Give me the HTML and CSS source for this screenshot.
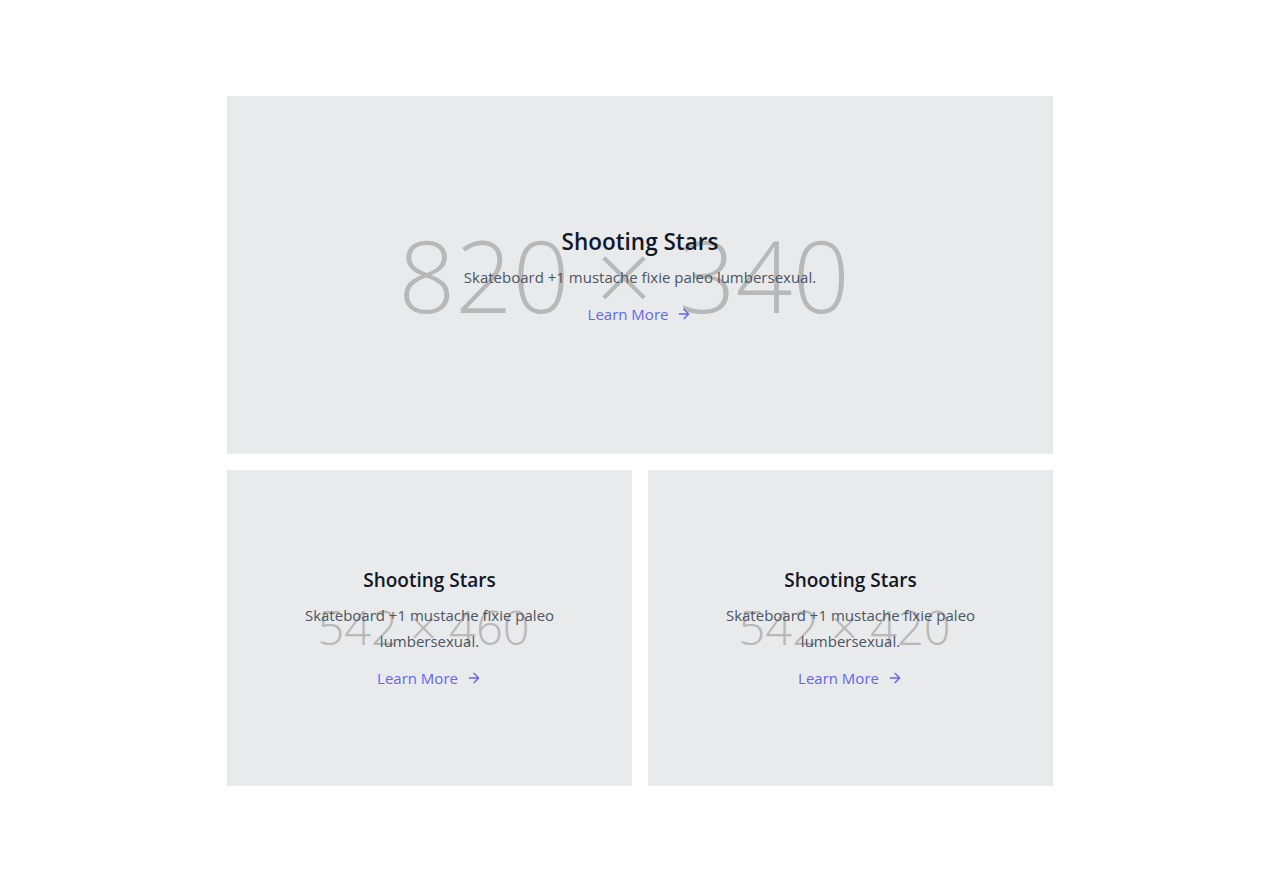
FILE: index.html
```html
<!DOCTYPE html>
<html lang="en">
<head>
<meta charset="utf-8">
<title>Shooting Stars</title>
<link rel="stylesheet" href="styles.css">
</head>
<body>
<section class="section">
  <div class="grid">
    <div class="card card-wide">
      <div class="ph ph-big"><span>820 × 340</span></div>
      <div class="content content-wide">
        <h2 class="title title-big">Shooting Stars</h2>
        <p class="desc">Skateboard +1 mustache fixie paleo lumbersexual.</p>
        <a class="link" href="#">Learn More
          <svg class="arrow" viewBox="0 0 24 24" fill="none" stroke="currentColor" stroke-width="2" stroke-linecap="round" stroke-linejoin="round"><path d="M5 12h14M12 5l7 7-7 7"/></svg>
        </a>
      </div>
    </div>
    <div class="card">
      <div class="ph ph-small"><span>542 × 460</span></div>
      <div class="content">
        <h2 class="title">Shooting Stars</h2>
        <p class="desc">Skateboard +1 mustache fixie paleo lumbersexual.</p>
        <a class="link" href="#">Learn More
          <svg class="arrow" viewBox="0 0 24 24" fill="none" stroke="currentColor" stroke-width="2" stroke-linecap="round" stroke-linejoin="round"><path d="M5 12h14M12 5l7 7-7 7"/></svg>
        </a>
      </div>
    </div>
    <div class="card">
      <div class="ph ph-small"><span>542 × 420</span></div>
      <div class="content">
        <h2 class="title">Shooting Stars</h2>
        <p class="desc">Skateboard +1 mustache fixie paleo lumbersexual.</p>
        <a class="link" href="#">Learn More
          <svg class="arrow" viewBox="0 0 24 24" fill="none" stroke="currentColor" stroke-width="2" stroke-linecap="round" stroke-linejoin="round"><path d="M5 12h14M12 5l7 7-7 7"/></svg>
        </a>
      </div>
    </div>
  </div>
</section>
</body>
</html>
```
FILE: styles.css
```css
* { box-sizing: border-box; }
html, body { margin: 0; padding: 0; background: #ffffff; }
body {
  font-family: "Open Sans", "Noto Sans", sans-serif;
  color: #4b5563;
}
.section {
  padding: 96px 0;
}
.grid {
  width: 826px;
  margin: 0 auto;
  display: grid;
  grid-template-columns: 1fr 1fr;
  column-gap: 16px;
  row-gap: 16px;
}
.card {
  position: relative;
  background: #e9eaeb;
  height: 316px;
  display: flex;
  align-items: center;
  justify-content: center;
  overflow: hidden;
}
.card-wide {
  grid-column: 1 / 3;
  height: 358px;
}
.ph {
  position: absolute;
  inset: 0;
  display: flex;
  align-items: center;
  justify-content: center;
  color: #b8b8b8;
  font-family: "Open Sans", sans-serif;
  font-weight: 300;
  white-space: nowrap;
  line-height: 1;
}
.ph-big { font-size: 100px; }
.ph-big span { transform: translate(-16px, -1px); }
.ph-small { font-size: 47px; }
.ph-small span { transform: translate(-6px, -1px); }
.content {
  position: relative;
  text-align: center;
  padding: 0 48px;
  display: flex;
  flex-direction: column;
  align-items: center;
}
.content-wide {
  padding-top: 4px;
}
.title {
  margin: 0 0 8px;
  font-size: 19px;
  line-height: 28px;
  font-weight: 600;
  color: #111827;
}
.title-big {
  font-size: 22.5px;
}
.desc {
  margin: 0;
  font-size: 15px;
  line-height: 26px;
  color: #4b5563;
}
.link {
  margin-top: 12px;
  display: inline-flex;
  align-items: center;
  font-size: 15px;
  line-height: 24px;
  color: #6366f1;
  text-decoration: none;
}
.arrow {
  width: 16px;
  height: 16px;
  margin-left: 8px;
}
```
